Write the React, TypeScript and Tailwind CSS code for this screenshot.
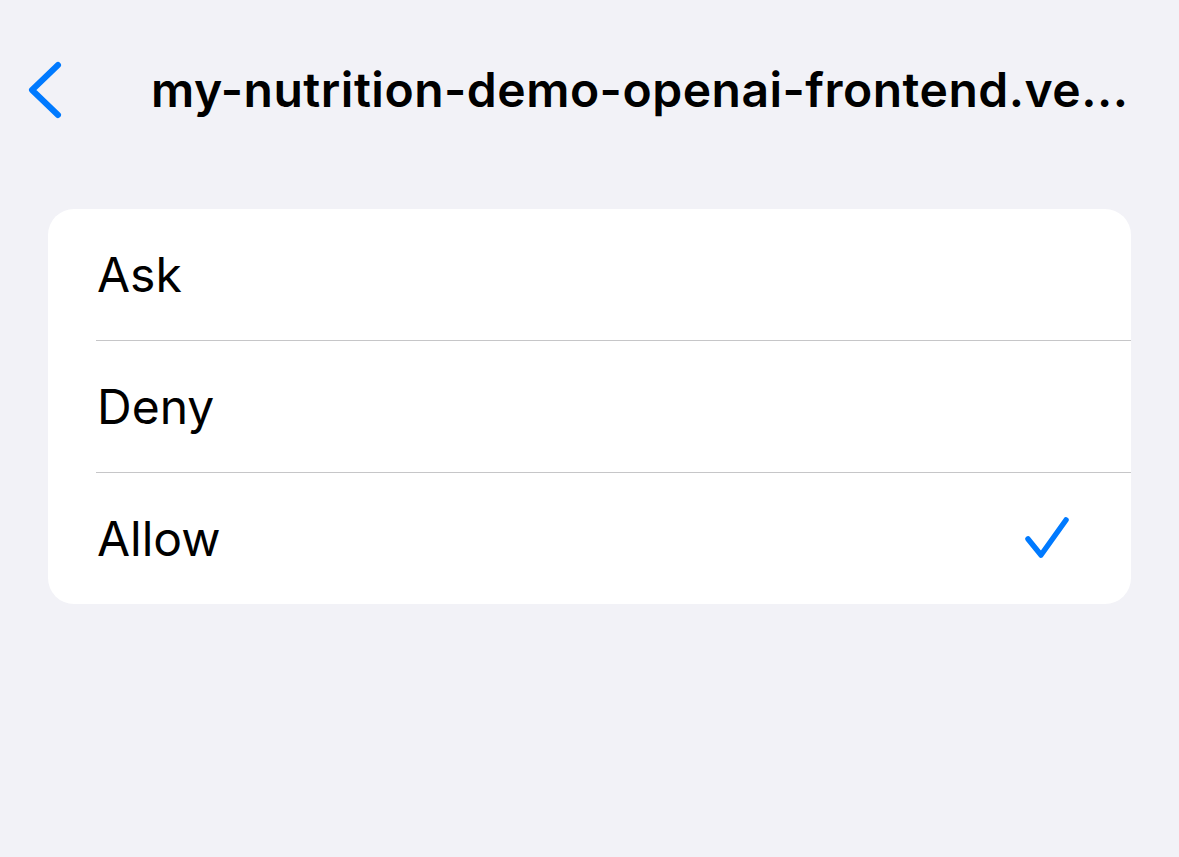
import { useState } from 'react';

const OPTIONS = ['Ask', 'Deny', 'Allow'];

export default function App() {
  const [selected, setSelected] = useState('Allow');

  return (
    <div
      className="min-h-[857px] w-full bg-[#f2f2f7] text-black"
      style={{ fontFamily: 'Inter, "Liberation Sans", sans-serif' }}
    >
      {/* Nav bar */}
      <header className="flex h-[180px] items-start pt-[58px]">
        <button
          type="button"
          className="ml-[25px] flex h-[64px] w-[42px] items-center justify-center text-[#007aff]"
          aria-label="Back"
        >
          <svg width="40" height="62" viewBox="0 0 40 62" fill="none">
            <path
              d="M32 6 L6 31 L32 56"
              stroke="currentColor"
              strokeWidth="6"
              strokeLinecap="round"
              strokeLinejoin="round"
            />
          </svg>
        </button>
        <h1 className="ml-[84px] whitespace-nowrap pt-[4px] text-[48px] font-semibold leading-[56px] tracking-[0.5px]">
          my-nutrition-demo-openai-frontend.ve...
        </h1>
      </header>

      {/* Options card */}
      <main className="px-[48px] pt-[29px]">
        <ul className="w-[1083px] overflow-hidden rounded-[26px] bg-white">
          {OPTIONS.map((opt, i) => (
            <li key={opt}>
              <button
                type="button"
                onClick={() => setSelected(opt)}
                className="flex h-[131px] w-full items-center pl-[49px] pr-[58px] text-left"
              >
                <span className="flex-1 text-[48px] font-normal leading-none">
                  {opt}
                </span>
                {selected === opt && (
                  <svg width="50" height="48" viewBox="0 0 50 48" fill="none" className="text-[#007aff]">
                    <path
                      d="M5 24 L18 40 L43 5"
                      stroke="currentColor"
                      strokeWidth="5.5"
                      strokeLinecap="round"
                      strokeLinejoin="round"
                    />
                  </svg>
                )}
              </button>
              {i < OPTIONS.length - 1 && <div className="ml-[48px] h-px bg-[#c6c6c8]" />}
            </li>
          ))}
        </ul>
      </main>
    </div>
  );
}
